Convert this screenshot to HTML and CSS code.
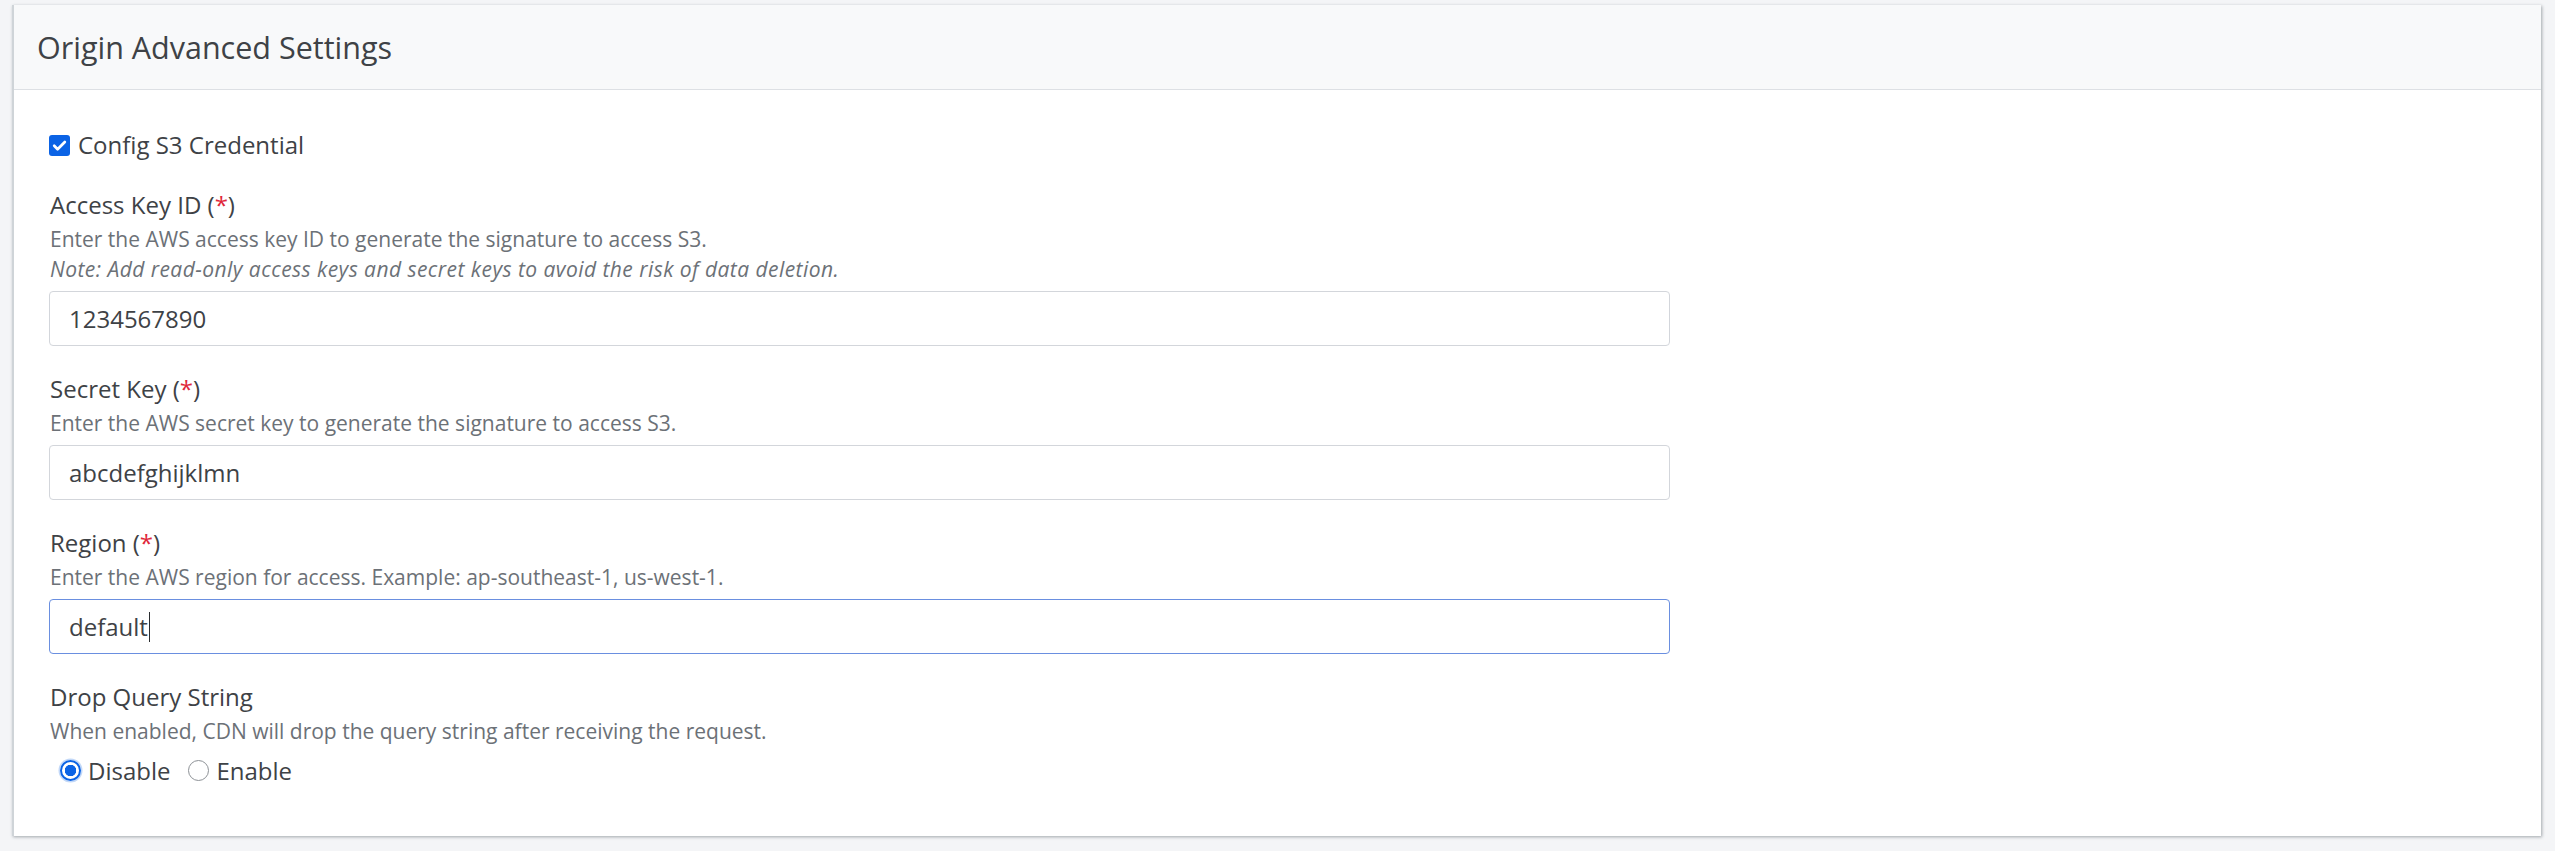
FILE: index.html
```html
<!DOCTYPE html>
<html lang="en">
<head>
<meta charset="utf-8">
<title>Origin Advanced Settings</title>
<link rel="stylesheet" href="styles.css">
</head>
<body>
<div class="page">
  <section class="card">
    <header class="card-header">
      <h2 class="card-title">Origin Advanced Settings</h2>
    </header>
    <div class="card-body">
      <label class="check-row">
        <span class="checkbox">
          <svg viewBox="0 0 21 21" width="21" height="21"><path d="M5.2 10.8l3.4 3.4L15.8 7" fill="none" stroke="#fff" stroke-width="2.7" stroke-linecap="round" stroke-linejoin="round"/></svg>
        </span>
        <span class="check-text">Config S3 Credential</span>
      </label>

      <div class="group">
        <div class="label">Access Key ID (<span class="req">*</span>)</div>
        <div class="desc">Enter the AWS access key ID to generate the signature to access S3.</div>
        <div class="desc note">Note: Add read-only access keys and secret keys to avoid the risk of data deletion.</div>
        <div class="input">1234567890</div>
      </div>

      <div class="group">
        <div class="label">Secret Key (<span class="req">*</span>)</div>
        <div class="desc">Enter the AWS secret key to generate the signature to access S3.</div>
        <div class="input">abcdefghijklmn</div>
      </div>

      <div class="group">
        <div class="label">Region (<span class="req">*</span>)</div>
        <div class="desc">Enter the AWS region for access. Example: ap-southeast-1, us-west-1.</div>
        <div class="input focused">default<span class="caret"></span></div>
      </div>

      <div class="group last">
        <div class="label">Drop Query String</div>
        <div class="desc">When enabled, CDN will drop the query string after receiving the request.</div>
        <div class="radios">
          <label class="radio-item"><span class="radio checked"></span><span>Disable</span></label>
          <label class="radio-item"><span class="radio"></span><span>Enable</span></label>
        </div>
      </div>
    </div>
  </section>
</div>
</body>
</html>
```

FILE: styles.css
```css
* { box-sizing: border-box; }

html, body {
  margin: 0;
  padding: 0;
  background: #f4f5f7;
  font-family: "Open Sans", "Lato", sans-serif;
  color: #3e4246;
}

.page {
  padding: 5px 14px 15px 12px;
}

.card {
  background: #ffffff;
  border-left: 2px solid #cfd4d8;
  box-shadow: 1px 1px 3px rgba(60, 70, 80, 0.45);
}

.card-header {
  height: 85px;
  background: #f8f9fa;
  border-bottom: 1px solid #dde0e4;
  display: flex;
  align-items: center;
  padding: 0 23px;
}

.card-title {
  margin: 0;
  font-size: 30.5px;
  font-weight: 400;
  color: #3e4246;
}

.card-body {
  padding: 37px 35px 48px 35px;
}

.check-row {
  display: flex;
  align-items: center;
  gap: 8px;
  height: 36px;
  font-size: 24px;
  line-height: 36px;
}

.checkbox {
  width: 21px;
  height: 21px;
  border-radius: 3px;
  background: #0b63e5;
  display: flex;
}

.group {
  margin-top: 24px;
}

.group + .group {
  margin-top: 25px;
}

.label {
  font-size: 24px;
  line-height: 36px;
  margin-bottom: 1px;
  padding-left: 1px;
}

.req {
  color: #e0273a;
}

.desc {
  font-size: 21px;
  line-height: 30px;
  color: #6c7177;
  padding-left: 1px;
}

.note {
  font-style: italic;
  letter-spacing: 0.45px;
}

.desc + .input,
.note + .input {
  margin-top: 7px;
}

.input {
  width: 1621px;
  height: 55px;
  border: 1px solid #d3d6db;
  border-radius: 4px;
  padding: 0 19px;
  font-size: 24px;
  display: flex;
  align-items: center;
  color: #3e4246;
}

.input.focused {
  border-color: #6a8fe0;
}

.caret {
  display: inline-block;
  width: 1.5px;
  height: 30px;
  background: #2a2d30;
  margin-left: 1px;
}

.radios {
  display: flex;
  align-items: center;
  gap: 18px;
  height: 36px;
  margin-top: 6px;
  padding-left: 11px;
  font-size: 24px;
}

.radio-item {
  display: flex;
  align-items: center;
  gap: 7px;
}

.radio {
  width: 21px;
  height: 21px;
  border-radius: 50%;
  border: 1.5px solid #8d9196;
  background: #fff;
}

.radio.checked {
  border: 2px solid #0b63e5;
  background: radial-gradient(circle, #0b63e5 0 5.5px, #ffffff 6px);
  box-shadow: 0 0 0 1.5px rgba(11, 99, 229, 0.25);
}
```
